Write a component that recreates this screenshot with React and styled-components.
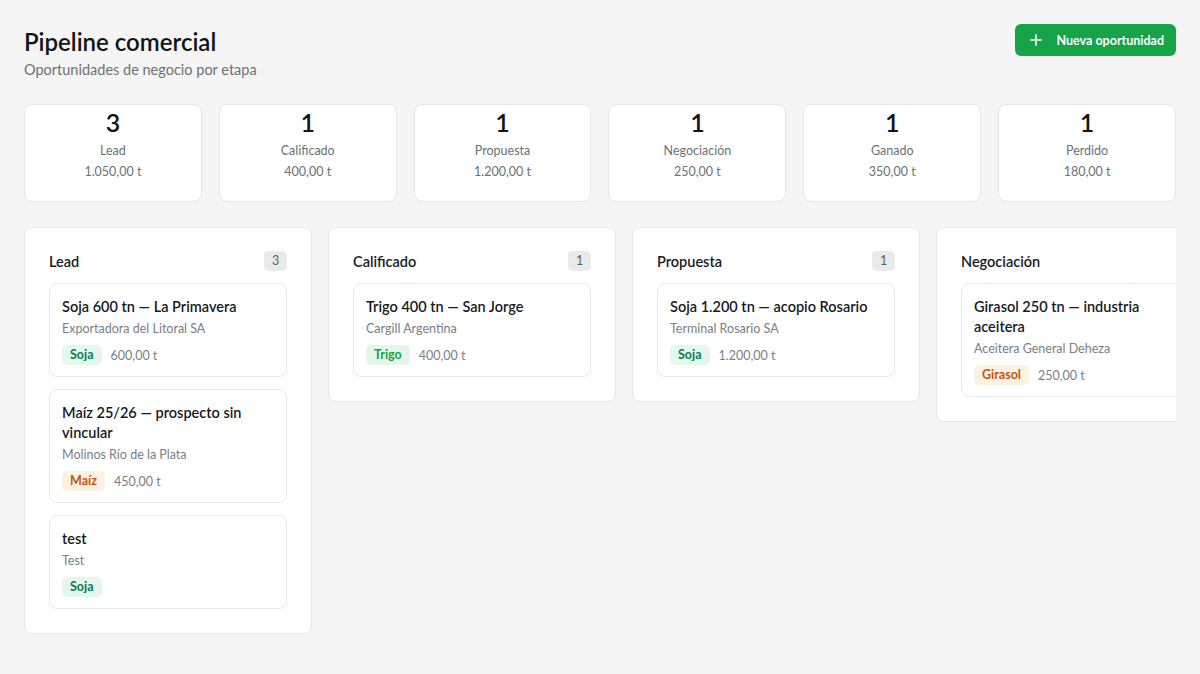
import React from "react";
import styled, { createGlobalStyle } from "styled-components";

const Global = createGlobalStyle`
  * { box-sizing: border-box; }
  html, body { margin: 0; padding: 0; background: #f4f5f4; }
  body { font-family: "Lato", "Noto Sans", sans-serif; color: #161a1d; }
`;

const Page = styled.div`
  padding: 24px 24px 40px;
  display: flex;
  flex-direction: column;
  gap: 24px;
`;

const Header = styled.header`
  display: flex;
  justify-content: space-between;
  align-items: flex-start;
`;

const TitleBlock = styled.div`
  display: flex;
  flex-direction: column;
  gap: 2px;
`;

const Title = styled.h1`
  margin: 0;
  padding-top: 1px;
  font-size: 24px;
  line-height: 33px;
  font-weight: 600;
  color: #111517;
`;

const Subtitle = styled.p`
  margin: 0;
  font-size: 14.5px;
  line-height: 20px;
  color: #6b7275;
`;

const PrimaryButton = styled.button`
  display: flex;
  align-items: center;
  gap: 15px;
  height: 32px;
  padding: 0 12px 0 15px;
  background: #17a34a;
  color: #fff;
  border: none;
  border-radius: 6px;
  font-family: inherit;
  font-size: 12.5px;
  font-weight: 700;
  cursor: pointer;
`;

const Stats = styled.section`
  display: grid;
  grid-template-columns: repeat(6, 1fr);
  gap: 17px;
`;

const StatCard = styled.div`
  background: #fff;
  border: 1px solid #e6e8e7;
  border-radius: 8px;
  height: 98px;
  padding: 1px 12px 0;
  display: flex;
  flex-direction: column;
  align-items: center;
`;

const StatNumber = styled.div`
  font-size: 25px;
  line-height: 32px;
  font-weight: 600;
  color: #111517;
`;

const StatLabel = styled.div`
  margin-top: 4px;
  font-size: 12.5px;
  line-height: 18px;
  color: #6b7275;
`;

const StatValue = styled.div`
  margin-top: 3px;
  font-size: 12.5px;
  line-height: 18px;
  color: #6b7275;
`;

const Board = styled.section`
  display: flex;
  gap: 16px;
  align-items: flex-start;
  overflow: hidden;
  margin-top: 1px;
`;

const Column = styled.div`
  flex: 0 0 288px;
  background: #fff;
  border: 1px solid #e6e8e7;
  border-radius: 8px;
  padding: 23px 24px 24px;
  display: flex;
  flex-direction: column;
  gap: 12px;
`;

const ColumnHeader = styled.div`
  display: flex;
  justify-content: space-between;
  align-items: center;
  height: 20px;
`;

const ColumnTitle = styled.h2`
  margin: 0;
  font-size: 14.5px;
  font-weight: 600;
  color: #161a1d;
`;

const CountBadge = styled.span`
  min-width: 23px;
  height: 20px;
  padding: 0 7px;
  border-radius: 5px;
  background: #e7ebe9;
  color: #5c6366;
  font-size: 12.5px;
  line-height: 20px;
  text-align: center;
`;

const Card = styled.article`
  border: 1px solid #e6e8e7;
  border-radius: 8px;
  padding: 13px 12px 11px;
  background: #fff;
  display: flex;
  flex-direction: column;
`;

const CardTitle = styled.h3`
  margin: 0;
  font-size: 14.5px;
  line-height: 20px;
  font-weight: 600;
  color: #161a1d;
`;

const CardSub = styled.div`
  margin-top: 4px;
  font-size: 12.5px;
  line-height: 16px;
  color: #7a8083;
`;

const CardMeta = styled.div`
  margin-top: 8px;
  display: flex;
  align-items: center;
  gap: 9px;
`;

const tagColors = {
  Soja: { bg: "#e4f6ee", fg: "#0f7a50" },
  Trigo: { bg: "#e6f5ea", fg: "#16a34a" },
  Maíz: { bg: "#fdf1e2", fg: "#c2570c" },
  Girasol: { bg: "#fdf1e2", fg: "#c2570c" },
};

const Tag = styled.span`
  display: inline-block;
  height: 20px;
  padding: 0 8px;
  border-radius: 5px;
  font-size: 12.5px;
  line-height: 20px;
  font-weight: 700;
  background: ${(p) => tagColors[p.$kind].bg};
  color: ${(p) => tagColors[p.$kind].fg};
`;

const Amount = styled.span`
  font-size: 12.5px;
  color: #7a8083;
`;

const PlusIcon = () => (
  <svg width="12" height="12" viewBox="0 0 12 12" fill="none" stroke="currentColor" strokeWidth="1.5" strokeLinecap="round">
    <path d="M6 0.75v10.5M0.75 6h10.5" />
  </svg>
);

const stats = [
  { n: 3, label: "Lead", value: "1.050,00 t" },
  { n: 1, label: "Calificado", value: "400,00 t" },
  { n: 1, label: "Propuesta", value: "1.200,00 t" },
  { n: 1, label: "Negociación", value: "250,00 t" },
  { n: 1, label: "Ganado", value: "350,00 t" },
  { n: 1, label: "Perdido", value: "180,00 t" },
];

const columns = [
  {
    title: "Lead",
    count: 3,
    cards: [
      { title: "Soja 600 tn — La Primavera", sub: "Exportadora del Litoral SA", tag: "Soja", amount: "600,00 t" },
      { title: "Maíz 25/26 — prospecto sin vincular", sub: "Molinos Río de la Plata", tag: "Maíz", amount: "450,00 t" },
      { title: "test", sub: "Test", tag: "Soja" },
    ],
  },
  {
    title: "Calificado",
    count: 1,
    cards: [{ title: "Trigo 400 tn — San Jorge", sub: "Cargill Argentina", tag: "Trigo", amount: "400,00 t" }],
  },
  {
    title: "Propuesta",
    count: 1,
    cards: [{ title: "Soja 1.200 tn — acopio Rosario", sub: "Terminal Rosario SA", tag: "Soja", amount: "1.200,00 t" }],
  },
  {
    title: "Negociación",
    count: 1,
    cards: [{ title: "Girasol 250 tn — industria aceitera", sub: "Aceitera General Deheza", tag: "Girasol", amount: "250,00 t" }],
  },
];

export default function App() {
  return (
    <>
      <Global />
      <Page>
        <Header>
          <TitleBlock>
            <Title>Pipeline comercial</Title>
            <Subtitle>Oportunidades de negocio por etapa</Subtitle>
          </TitleBlock>
          <PrimaryButton>
            <PlusIcon />
            Nueva oportunidad
          </PrimaryButton>
        </Header>
        <Stats>
          {stats.map((s) => (
            <StatCard key={s.label}>
              <StatNumber>{s.n}</StatNumber>
              <StatLabel>{s.label}</StatLabel>
              <StatValue>{s.value}</StatValue>
            </StatCard>
          ))}
        </Stats>
        <Board>
          {columns.map((c) => (
            <Column key={c.title}>
              <ColumnHeader>
                <ColumnTitle>{c.title}</ColumnTitle>
                <CountBadge>{c.count}</CountBadge>
              </ColumnHeader>
              {c.cards.map((card) => (
                <Card key={card.title}>
                  <CardTitle>{card.title}</CardTitle>
                  <CardSub>{card.sub}</CardSub>
                  <CardMeta>
                    <Tag $kind={card.tag}>{card.tag}</Tag>
                    {card.amount && <Amount>{card.amount}</Amount>}
                  </CardMeta>
                </Card>
              ))}
            </Column>
          ))}
        </Board>
      </Page>
    </>
  );
}
